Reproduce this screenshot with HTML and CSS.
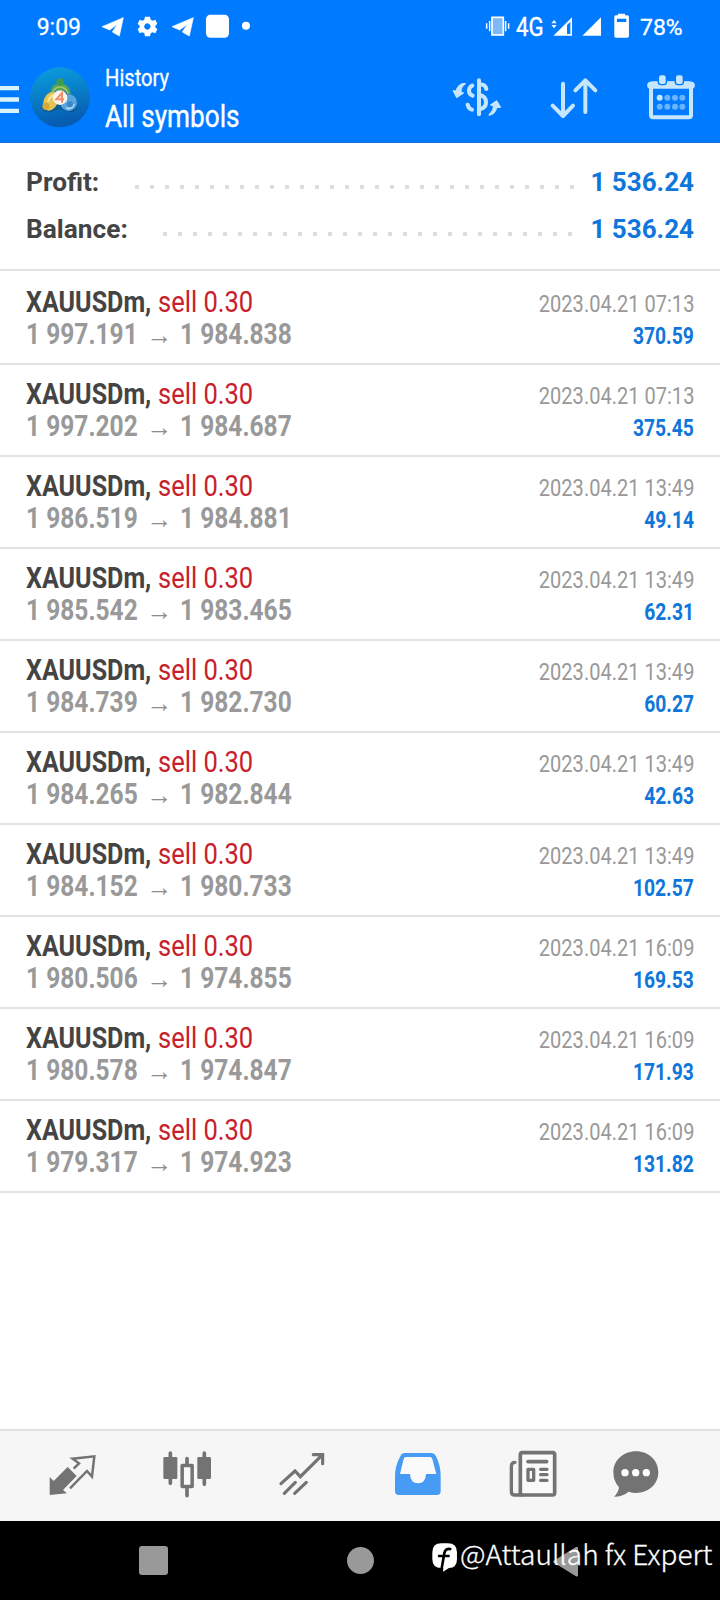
FILE: index.html
```html
<!DOCTYPE html>
<html lang="en">
<head>
<meta charset="utf-8">
<title>History</title>
<link rel="stylesheet" href="styles.css">
</head>
<body>
<div class="screen">
  <header class="top">
    <div class="status">
      <span class="clock">9:09</span>
      <svg class="status-left" viewBox="300 40 460 80" width="153.3" height="26.7">
        <g fill="#fff">
          <path d="M306 81L370 54L358 109L337 97L352 74L329 91Z" stroke="#fff" stroke-width="2" stroke-linejoin="round"/>
          <path d="M516 81L580 54L568 109L547 97L562 74L539 91Z" stroke="#fff" stroke-width="2" stroke-linejoin="round"/>
          <path fill-rule="evenodd" d="M435 51h15l2 9l6 3l8-3l6 12l-6 6v5l6 6l-6 12l-8-3l-6 3l-2 9h-15l-2-9l-6-3l-8 3l-6-12l6-6v-5l-6-6l6-12l8 3l6-3zM442 71a9.500 9.500 0 1 0 .1 0z"/>
          <rect x="618" y="45" width="69" height="69" rx="13"/>
          <circle cx="738" cy="78" r="12"/>
        </g>
      </svg>
      <svg class="vibrate" viewBox="136 40 76 76" width="25.3" height="25.3">
        <rect x="157" y="53" width="34" height="53" fill="#7fb8fa" stroke="#fff" stroke-width="5"/>
        <path d="M150 64v31M141 71v16M198 64v31M207 71v16" stroke="#fff" stroke-width="4.500"/>
      </svg>
      <span class="network">4G</span>
      <svg class="signal" viewBox="330 40 240 76" width="80" height="25.3">
        <g fill="#fff">
          <path d="M342 61l8 10h-16zM342 86l-8-10h16z"/>
          <path fill-rule="evenodd" d="M340 108L396 53V108ZM381 76V103H391V66Z"/>
          <path d="M427 108L483 53V108Z"/>
          <path fill-rule="evenodd" d="M534 42h21v5h7q5 0 5 5v57q0 5-5 5h-34q-5 0-5-5V52q0-5 5-5h6zM531 57v10h28V57z"/>
        </g>
      </svg>
      <span class="battery">78%</span>
    </div>
    <div class="appbar">
      <svg class="menu" viewBox="0 258 57 82" width="19" height="27.3"><path d="M0 264.500H57M0 298.500H57M0 332.500H57" stroke="#d9f3fb" stroke-width="13"/></svg>
      <svg class="logo" viewBox="90 202 180 182" width="60" height="60.700">
        <defs>
          <linearGradient id="sea" x1="0" y1="0" x2=".2" y2="1"><stop offset="0" stop-color="#0c9fe0"/><stop offset=".5" stop-color="#087fc8"/><stop offset="1" stop-color="#075bb0"/></linearGradient>
        </defs>
        <circle cx="180" cy="293" r="90" fill="url(#sea)"/>
        <path d="M126 324q3 14 24 13l30-8 33 9q16-3 19-18l-19-36-31-15-31 16z" fill="#0b4870" opacity=".5"/>
        <path d="M152 290q-5-38 28-38t32 38q-10-18-32-18t-28 18z" fill="#58a452"/>
        <path d="M158 282q4-20 22-20t24 20" fill="none" stroke="#9bc976" stroke-width="5"/>
        <circle cx="180" cy="247" r="11" fill="#3f9b50"/>
        <ellipse cx="152" cy="305" rx="21" ry="29" fill="#e4c551" transform="rotate(24 152 305)"/>
        <path d="M145 306q3-15 15-19" fill="none" stroke="#f5e59b" stroke-width="7"/>
        <circle cx="138" cy="320" r="11" fill="#d5aa39"/>
        <ellipse cx="206" cy="309" rx="25" ry="25" fill="#58a4dc"/>
        <path d="M199 325q18 5 23-12" fill="none" stroke="#a8d8f3" stroke-width="6"/>
        <circle cx="210" cy="314" r="9" fill="#3985c9"/>
        <circle cx="180" cy="294" r="22" fill="#fff3ea"/>
        <path d="M186 309V280L169 299H192" fill="none" stroke="#ef9168" stroke-width="6"/>
      </svg>
      <div class="titles">
        <span class="subtitle">History</span>
        <span class="title">All symbols</span>
      </div>
      <svg class="actions" viewBox="30 215 740 150" width="246.700" height="50" fill="none" stroke="#c5e6fc" stroke-linecap="round" stroke-linejoin="round">
        <g stroke-width="12">
          <path d="M117 240V342"/>
          <path d="M119 252q17 0 20 14M97 256q-10 4-10 15q0 11 11 15M119 284q19 4 19 22q0 17-19 21M83 313q3 12 13 15"/>
        </g>
        <g fill="#c5e6fc" stroke="#c5e6fc" stroke-width="3">
          <path d="M74 249Q54 249 48 272L39 271L50 292L71 278L63 275Q63 259 76 251Z"/>
          <path d="M148 345Q166 342 170 322L182 321L170 301L151 314L160 316Q160 332 148 341Z"/>
        </g>
        <path d="M369 250V344M338 316L369 347L399 316M436 335V242M406 270L436 240L466 270" stroke-width="12"/>
        <rect x="633" y="249" width="120" height="102" rx="6" stroke-width="12"/>
        <path d="M632 255h122" stroke-width="21"/>
        <rect x="655" y="223" width="24" height="30" rx="8" fill="#c5e6fc" stroke="#007aff" stroke-width="4"/>
        <rect x="706" y="223" width="24" height="30" rx="8" fill="#c5e6fc" stroke="#007aff" stroke-width="4"/>
        <g fill="#69b4fb" stroke="none">
          <circle cx="659" cy="292" r="9" fill="#c5e6fc"/><circle cx="682" cy="292" r="9"/><circle cx="705" cy="292" r="9"/><circle cx="727" cy="292" r="9"/>
          <circle cx="659" cy="319" r="9"/><circle cx="682" cy="319" r="9"/><circle cx="705" cy="319" r="9"/><circle cx="727" cy="319" r="9"/>
        </g>
      </svg>
    </div>
  </header>

  <section class="summary">
    <div class="total"><span class="label">Profit:</span><i class="dots dots-profit"></i><span class="amount">1 536.24</span></div>
    <div class="total"><span class="label">Balance:</span><i class="dots dots-balance"></i><span class="amount">1 536.24</span></div>
  </section>

  <main class="deals">
    <div class="deal"><div class="line"><b class="symbol">XAUUSDm,</b><span class="side">sell 0.30</span><span class="date">2023.04.21 07:13</span></div><div class="line"><b class="price open">1 997.191</b><span class="arrow">→</span><b class="price">1 984.838</b><b class="gain">370.59</b></div></div>
    <div class="deal"><div class="line"><b class="symbol">XAUUSDm,</b><span class="side">sell 0.30</span><span class="date">2023.04.21 07:13</span></div><div class="line"><b class="price open">1 997.202</b><span class="arrow">→</span><b class="price">1 984.687</b><b class="gain">375.45</b></div></div>
    <div class="deal"><div class="line"><b class="symbol">XAUUSDm,</b><span class="side">sell 0.30</span><span class="date">2023.04.21 13:49</span></div><div class="line"><b class="price open">1 986.519</b><span class="arrow">→</span><b class="price">1 984.881</b><b class="gain">49.14</b></div></div>
    <div class="deal"><div class="line"><b class="symbol">XAUUSDm,</b><span class="side">sell 0.30</span><span class="date">2023.04.21 13:49</span></div><div class="line"><b class="price open">1 985.542</b><span class="arrow">→</span><b class="price">1 983.465</b><b class="gain">62.31</b></div></div>
    <div class="deal"><div class="line"><b class="symbol">XAUUSDm,</b><span class="side">sell 0.30</span><span class="date">2023.04.21 13:49</span></div><div class="line"><b class="price open">1 984.739</b><span class="arrow">→</span><b class="price">1 982.730</b><b class="gain">60.27</b></div></div>
    <div class="deal"><div class="line"><b class="symbol">XAUUSDm,</b><span class="side">sell 0.30</span><span class="date">2023.04.21 13:49</span></div><div class="line"><b class="price open">1 984.265</b><span class="arrow">→</span><b class="price">1 982.844</b><b class="gain">42.63</b></div></div>
    <div class="deal"><div class="line"><b class="symbol">XAUUSDm,</b><span class="side">sell 0.30</span><span class="date">2023.04.21 13:49</span></div><div class="line"><b class="price open">1 984.152</b><span class="arrow">→</span><b class="price">1 980.733</b><b class="gain">102.57</b></div></div>
    <div class="deal"><div class="line"><b class="symbol">XAUUSDm,</b><span class="side">sell 0.30</span><span class="date">2023.04.21 16:09</span></div><div class="line"><b class="price open">1 980.506</b><span class="arrow">→</span><b class="price">1 974.855</b><b class="gain">169.53</b></div></div>
    <div class="deal"><div class="line"><b class="symbol">XAUUSDm,</b><span class="side">sell 0.30</span><span class="date">2023.04.21 16:09</span></div><div class="line"><b class="price open">1 980.578</b><span class="arrow">→</span><b class="price">1 974.847</b><b class="gain">171.93</b></div></div>
    <div class="deal"><div class="line"><b class="symbol">XAUUSDm,</b><span class="side">sell 0.30</span><span class="date">2023.04.21 16:09</span></div><div class="line"><b class="price open">1 979.317</b><span class="arrow">→</span><b class="price">1 974.923</b><b class="gain">131.82</b></div></div>
  </main>

  <nav class="tabs">
    <svg class="tab" viewBox="142 90 150 145" width="50" height="48.300">
      <path d="M150 171L162 183L204 141L231 168L190 210L202 220L150 225Z" fill="#737373"/>
      <path d="M211 205L262 153L277 170L284 109L219 116L238 130L222 146" fill="none" stroke="#737373" stroke-width="7.500"/>
    </svg>
    <svg class="tab" viewBox="487 90 150 145" width="50" height="48.300">
      <g stroke="#737373" stroke-width="11" stroke-linecap="round" fill="none"><path d="M512 99v91M614 99v94M562 116v16M562 206v21"/></g>
      <rect x="491" y="111" width="42" height="66" rx="4" fill="#737373"/><rect x="593" y="111" width="41" height="66" rx="4" fill="#737373"/>
      <rect x="547.500" y="136.500" width="30" height="63" fill="#fafafa" stroke="#737373" stroke-width="10.500" stroke-linejoin="round"/>
    </svg>
    <svg class="tab" viewBox="832 90 150 145" width="50" height="48.300">
      <path d="M844 191L886 153L902 170L968 105M941 104H969V131M854 220L887 187M885 220L920 187" fill="none" stroke="#737373" stroke-width="9.500" stroke-linecap="round"/>
    </svg>
    <svg class="tab" viewBox="98 90 150 145" width="50" height="48.300">
      <path fill="#479bf5" d="M133 99H212Q222 99 227 109Q241 137 241 168V214Q241 225 230 225H115Q104 225 104 214V168Q104 137 120 109Q124 99 133 99Z"/>
      <path fill="#fafafa" d="M136 111Q132 111 130 117L119 162H149Q150 190 173 190Q196 190 197 162H228L216 117Q214 111 210 111Z"/>
    </svg>
    <svg class="tab" viewBox="445 90 150 145" width="50" height="48.300">
      <g fill="none" stroke="#737373" stroke-linecap="round" stroke-linejoin="round">
        <rect x="482" y="98" width="103" height="127" rx="6" fill="#fafafa" stroke-width="11"/>
        <path d="M466 127q-11 0-11 12v76q0 10 11 10h20" stroke-width="10"/>
        <path d="M505 125h56" stroke-width="11"/>
        <path d="M543 148h19M543 164h19M543 181h19" stroke-width="10"/>
        <rect x="505" y="148" width="17" height="33" stroke-width="10"/>
      </g>
    </svg>
    <svg class="tab" viewBox="754 90 150 145" width="50" height="48.300">
      <path fill="#737373" d="M829 94C867 94 896 121 896 157C896 193 867 219 829 219Q818 219 807 215Q789 230 763 230Q776 219 778 202Q761 184 761 157C761 121 791 94 829 94Z"/>
      <g fill="#fff"><circle cx="796" cy="158" r="11"/><circle cx="828" cy="158" r="11"/><circle cx="860" cy="158" r="11"/></g>
    </svg>
  </nav>

  <footer class="system">
    <i class="recent"></i><i class="home"></i>
    <svg class="back" viewBox="578 375 80 94" width="26.700" height="31.300"><path d="M583 422L651 380Q654 378 654 382V462Q654 466 651 464Z" fill="#999" stroke="#999" stroke-width="4" stroke-linejoin="round"/></svg>
    <div class="watermark">
      <svg viewBox="217 368 76 88" width="25.300" height="29.300"><path fill="#fff" d="M245 369h20q27 0 27 27v20q0 27-24 27l-18 11l1-11h-6q-27 0-27-27v-20q0-27 27-27z"/><path d="M275 387q-18-5-21 12l-8 46M235 407h35" fill="none" stroke="#000" stroke-width="8"/></svg>
      <span class="handle">@Attaullah fx Expert</span>
    </div>
  </footer>
</div>
</body>
</html>
```
FILE: styles.css
```css
* { box-sizing: border-box; }
body { margin: 0; background: #fff; font-family: Roboto, "Liberation Sans", sans-serif; }
.screen { width: 720px; height: 1600px; display: flex; flex-direction: column; overflow: hidden; }
svg { display: block; flex: none; }
span, b { white-space: nowrap; transform-origin: left; }

.top { height: 143px; background: #007aff; color: #fff; border-bottom: 1px solid #1672d4; }
.status { height: 53px; padding: 13.3px 0 0 36.700px; display: flex; align-items: flex-start; }
.clock { width: 63.300px; padding-top: 1px; font-size: 23px; line-height: 28px; -webkit-text-stroke: .3px #fff; }
.status-left { margin-right: 232px; }
.network { width: 32px; margin-left: 5px; padding-top: 1px; font-size: 25.500px; line-height: 27px; transform: scaleX(.87); -webkit-text-stroke: .4px #fff; }
.signal { margin-left: 2.300px; }
.battery { margin-left: 10px; font-size: 22.500px; line-height: 28px; transform: scaleX(1.02); -webkit-text-stroke: .3px #fff; }

.appbar { height: 89px; display: flex; align-items: flex-start; padding-top: 14.300px; }
.menu { margin-top: 18.700px; }
.logo { margin: 0 15px 0 11px; }
.titles { width: 345px; display: flex; flex-direction: column; align-items: flex-start; padding-top: 1px; }
.subtitle { font-size: 24px; line-height: 21px; transform: scaleX(.84); -webkit-text-stroke: .3px #fff; }
.title { font-size: 31.500px; line-height: 56px; transform: scaleX(.83); -webkit-text-stroke: .4px #fff; }
.actions { margin-top: 4.700px; }

.summary { height: 128px; padding: 16px 26px; border-bottom: 2px solid #e2e2e2; }
.total { height: 47px; display: flex; font-size: 26px; font-weight: 700; line-height: 47px; }
.label { color: #444; transform: scaleX(1.01); }
.amount { color: #0f76da; }
.dots { height: 4px; margin: 26px 15.500px 0 auto; background: radial-gradient(circle at 2px 2px, #dcdcdc 2px, transparent 2.600px) 0 0 / 15px 4px; }
.dots-profit { width: 440px; }
.dots-balance { width: 410px; margin-right: 17.500px; }

.deal { height: 92px; padding: 13px 26px 0; border-bottom: 2px solid #e2e2e2; }
.deal:first-child { height: 94px; padding-top: 15px; }
.line { height: 32px; display: flex; align-items: baseline; font-size: 29px; line-height: 32px; }
.symbol { width: 132px; color: #444; transform: scaleX(.865); }
.side { color: #c8202a; transform: scaleX(.88); }
.date { margin-left: auto; color: #999; font-size: 23.500px; transform: scaleX(.853); transform-origin: right; }
.price { color: #999; transform: scaleX(.846); }
.open { width: 120.500px; }
.arrow { width: 33.500px; color: #8c8c8c; font-family: "Liberation Sans", sans-serif; font-size: 26px; line-height: 24px; }
.gain { margin-left: auto; color: #0f76da; font-size: 24px; transform: scaleX(.803); transform-origin: right; }

.tabs { height: 92px; margin-top: auto; padding: 19px 0 0 47.300px; display: flex; background: #f6f6f6; border-top: 2px solid #e2e2e2; }
.tab { margin-right: 65px; }
.tab:nth-child(4), .tab:nth-child(3) { margin-right: 65.500px; }
.tab:nth-child(5) { margin-right: 53px; }

.system { position: relative; height: 79px; background: #000; display: flex; align-items: flex-start; padding: 25px 0 0 139px; }
.recent { width: 29px; height: 29px; border-radius: 3px; background: #999; }
.home { width: 27px; height: 27px; margin: 1px 178px 0 179px; border-radius: 50%; background: #999; }
.watermark { position: absolute; left: 432.300px; top: 22px; display: flex; color: #fff; }
.handle { margin: -2px 0 0 2px; font-family: "Noto Sans CJK SC", sans-serif; font-size: 27px; font-weight: 300; line-height: 26px; transform: scaleX(1.038); -webkit-text-stroke: .3px #fff; }
```
